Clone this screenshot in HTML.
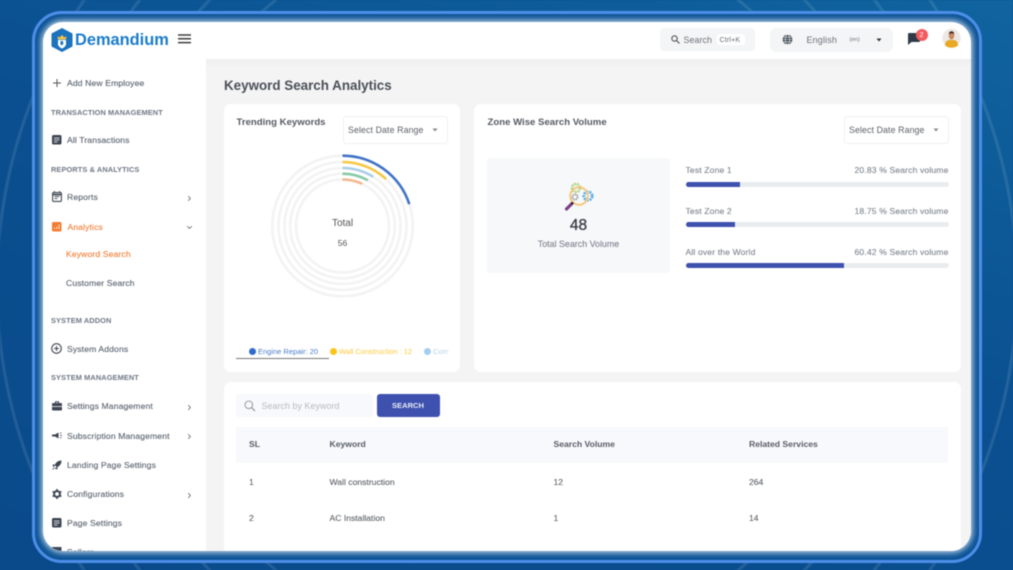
<!DOCTYPE html>
<html><head><meta charset="utf-8"><style>
*{box-sizing:border-box}
html,body{margin:0;padding:0;width:1013px;height:570px;overflow:hidden;background:#0b4f8f}
body{font-family:"Liberation Sans",sans-serif}
#root{position:absolute;left:0;top:0;width:1013px;height:570px;overflow:hidden;filter:blur(.45px);background:
radial-gradient(circle at 507px 285px,transparent 365px,rgba(255,255,255,.1) 366px,rgba(255,255,255,.1) 368px,transparent 369px,transparent 410px,rgba(255,255,255,.1) 411px,rgba(255,255,255,.1) 413px,transparent 414px,transparent 463px,rgba(255,255,255,.1) 464px,rgba(255,255,255,.1) 466px,transparent 467px,transparent 508px,rgba(255,255,255,.1) 509px,rgba(255,255,255,.1) 511px,transparent 512px),
linear-gradient(20deg,#0a4a8a 0%,#0b5091 55%,#10649f 100%)}
.a{position:absolute}
.t{position:absolute;white-space:nowrap;line-height:12px;height:12px}
.s{font-size:8.6px;color:#5b6470;letter-spacing:.12px;-webkit-text-stroke:.12px #5b6470}
.h{font-size:7.4px;font-weight:bold;color:#6f7785;letter-spacing:.1px}
.card{position:absolute;background:#fff;border-radius:7px}
.sel{position:absolute;background:#fff;border:1px solid #eff0f2;border-radius:3px}
.z{font-size:8.6px;color:#7d858f;letter-spacing:.13px;-webkit-text-stroke:.1px #7d858f}
.bar{position:absolute;left:685.5px;width:263px;height:5px;border-radius:3px;background:#e9ecef}
.bar i{display:block;height:5px;border-radius:3px 0 0 3px;background:#3f51ae}
.th{font-size:8.6px;font-weight:bold;color:#555c66}
.td{font-size:8.6px;color:#5b5f66;-webkit-text-stroke:.1px #5b5f66}
</style></head><body><div id="root">
<div class="a" style="left:32px;top:11px;width:950px;height:552px;border:3px solid #4c8ee8;border-radius:30px;background:#0d5496"></div>
<div class="a" style="left:43px;top:22px;width:928px;height:529px;border-radius:20px;background:#fff;overflow:hidden;box-shadow:0 0 6px 2px rgba(235,242,250,.75)">
 <div class="a" style="left:163px;top:37px;width:765px;height:492px;background:linear-gradient(#efefef,#f4f4f5 8px)"></div>
</div>
<div class="a" style="left:43px;top:22px;width:928px;height:529px;border-radius:20px;overflow:hidden" id="inner">
 <div style="position:absolute;left:-43px;top:-22px;width:1013px;height:570px">

 <!-- logo -->
 <svg class="a" style="left:50px;top:27px" width="24" height="26" viewBox="0 0 24 26">
  <path d="M12 1 L22.5 6.5 V19.5 L12 25 L1.5 19.5 V6.5 Z" fill="#1b72bd"/>
  <path d="M7.5 9 L9.5 10.5 L12 8 L14.5 10.5 L16.5 9 L16 12.5 H8 Z" fill="#f3c34b"/>
  <path d="M8 13 H16 V18 Q14 21 12 21.5 Q10 21 8 18 Z" fill="#fff"/>
  <path d="M10.5 14 H12.5 Q14.2 15.5 12.5 18 H10.5 Z" fill="#1b72bd"/>
 </svg>
 <span class="t" style="left:75px;top:32px;height:16px;line-height:16px;font-size:16.4px;font-weight:bold;color:#1b7ccb">Demandium</span>
 <svg class="a" style="left:178px;top:34px" width="13" height="10"><path d="M0 1H13M0 4.8H13M0 8.6H13" stroke="#3d3d3d" stroke-width="1.5"/></svg>

 <!-- sidebar -->
 <svg class="a" style="left:53px;top:79px" width="8" height="8"><path d="M4 0V8M0 4H8" stroke="#555" stroke-width="1"/></svg>
 <span class="t s" style="left:67px;top:77px">Add New Employee</span>
 <span class="t h" style="left:51px;top:106.500px">TRANSACTION MANAGEMENT</span>
 <svg class="a" style="left:52px;top:135px" width="10" height="10"><rect width="9.500" height="9.500" rx="1.500" fill="#3e4652"/><path d="M2 3H7.500M2 5H7.500M2 7H5.500" stroke="#fff" stroke-width=".8"/></svg>
 <span class="t s" style="left:67px;top:134px">All Transactions</span>
 <span class="t h" style="left:51px;top:163.500px">REPORTS &amp; ANALYTICS</span>
 <svg class="a" style="left:52px;top:191px" width="10" height="11"><rect x=".6" y="1.600" width="8.800" height="8.800" rx="1" fill="none" stroke="#3e4652" stroke-width="1.100"/><path d="M.6 3.600H9.400" stroke="#3e4652" stroke-width="1.600"/><path d="M2.500 0V2M7.500 0V2M2.500 5.600H7.500M2.500 7.600H5.500" stroke="#3e4652" stroke-width=".9"/></svg>
 <span class="t s" style="left:67px;top:191px">Reports</span>
 <svg class="a" style="left:187px;top:195px" width="5" height="7"><path d="M1.200 1.200L3.400 3.500L1.200 5.800" fill="none" stroke="#666" stroke-width=".8"/></svg>
 <svg class="a" style="left:52px;top:222px" width="10" height="10"><rect width="9.500" height="9.500" rx="1.500" fill="#f47b32"/><path d="M2.500 7V5.800M4.800 7V4.800M7 7V2.500" stroke="#fff" stroke-width=".8"/></svg>
 <span class="t s" style="left:67.500px;top:220.500px;color:#f0803c;-webkit-text-stroke-color:#f0803c">Analytics</span>
 <svg class="a" style="left:186px;top:225px" width="7" height="5"><path d="M1.200 1.200L3.500 3.400L5.800 1.200" fill="none" stroke="#666" stroke-width=".8"/></svg>
 <span class="t s" style="left:66px;top:248px;color:#f0803c;-webkit-text-stroke-color:#f0803c">Keyword Search</span>
 <span class="t s" style="left:66px;top:277px">Customer Search</span>
 <span class="t h" style="left:51px;top:315px">SYSTEM ADDON</span>
 <svg class="a" style="left:51px;top:343px" width="11" height="11"><circle cx="5.500" cy="5.500" r="4.800" fill="none" stroke="#3e4652" stroke-width="1.100"/><path d="M5.500 3V8M3 5.500H8" stroke="#3e4652" stroke-width="1"/></svg>
 <span class="t s" style="left:67px;top:343px">System Addons</span>
 <span class="t h" style="left:51px;top:372px">SYSTEM MANAGEMENT</span>
 <svg class="a" style="left:52px;top:401px" width="10" height="10"><path d="M3.500 2V.8H6.500V2" fill="none" stroke="#3e4652"/><rect y="2" width="10" height="7.500" rx="1" fill="#3e4652"/><path d="M0 5.500H10" stroke="#fff" stroke-width=".8"/></svg>
 <span class="t s" style="left:67px;top:400px">Settings Management</span>
 <svg class="a" style="left:187px;top:404px" width="5" height="7"><path d="M1.200 1.200L3.400 3.500L1.200 5.800" fill="none" stroke="#666" stroke-width=".8"/></svg>
 <svg class="a" style="left:52px;top:431px" width="10" height="10"><path d="M0 3.500H3L6.500 1.500V7.500L3 5.500H0Z" fill="#3e4652"/><path d="M8 2.500L9.500 1.800M8 4.500H10M8 6.500L9.500 7.200" stroke="#3e4652" stroke-width=".8"/></svg>
 <span class="t s" style="left:67px;top:429.500px">Subscription Management</span>
 <svg class="a" style="left:187px;top:433px" width="5" height="7"><path d="M1.200 1.200L3.400 3.500L1.200 5.800" fill="none" stroke="#666" stroke-width=".8"/></svg>
 <svg class="a" style="left:52px;top:460px" width="10" height="10"><path d="M9.500 .5C6.500 .5 4 2 2.800 5L5 7.200C8 6 9.500 3.500 9.500 .5Z" fill="#3e4652"/><path d="M1 5H3L1.500 6.500ZM5 9V7L3.500 8.500ZM.5 9.500L2.500 7.500" stroke="#3e4652" stroke-width=".8" fill="#3e4652"/></svg>
 <span class="t s" style="left:67px;top:458.500px">Landing Page Settings</span>
 <svg class="a" style="left:52px;top:489px" width="10" height="10" viewBox="0 0 10 10"><circle cx="5" cy="5" r="2.900" fill="none" stroke="#3e4652" stroke-width="2"/><path d="M5 0V2M5 8V10M.7 2.500L2.400 3.500M7.600 6.500L9.300 7.500M.7 7.500L2.400 6.500M7.600 3.500L9.300 2.500" stroke="#3e4652" stroke-width="1.600"/></svg>
 <span class="t s" style="left:67px;top:488px">Configurations</span>
 <svg class="a" style="left:187px;top:492px" width="5" height="7"><path d="M1.200 1.200L3.400 3.500L1.200 5.800" fill="none" stroke="#666" stroke-width=".8"/></svg>
 <svg class="a" style="left:52px;top:518px" width="10" height="10"><rect width="9.500" height="9.500" rx="1.500" fill="#3e4652"/><path d="M2 3H7.500M2 5H7.500M2 7H5.500" stroke="#fff" stroke-width=".8"/></svg>
 <span class="t s" style="left:67px;top:517px">Page Settings</span>
 <svg class="a" style="left:52px;top:547px" width="10" height="4"><rect width="9.500" height="4" fill="#3e4652"/></svg>
 <span class="t s" style="left:67px;top:545.500px">Sellers</span>

 <!-- topbar -->
 <div class="a" style="left:660px;top:28px;width:95px;height:23px;background:#f4f5f6;border-radius:4px"></div>
 <svg class="a" style="left:671px;top:35px" width="9" height="9"><circle cx="3.500" cy="3.500" r="2.700" fill="none" stroke="#555" stroke-width="1.100"/><path d="M5.500 5.500L8.500 8.500" stroke="#555" stroke-width="1.200"/></svg>
 <span class="t" style="left:683.500px;top:33.500px;font-size:8.800px;color:#6b7078;letter-spacing:.1px">Search</span>
 <div class="a" style="left:717px;top:34px;width:28px;height:11px;background:#fff;border-radius:3px"></div>
 <span class="t" style="left:719.500px;top:33.500px;font-size:7.200px;color:#666c75;letter-spacing:.1px">Ctrl+K</span>
 <div class="a" style="left:770px;top:28px;width:123px;height:24px;background:#f4f5f6;border-radius:6px"></div>
 <svg class="a" style="left:782px;top:34px" width="11" height="11" viewBox="0 0 11 11"><circle cx="5.500" cy="5.500" r="4.900" fill="#3e4652"/><path d="M.6 5.500H10.400M1.300 3.200H9.700M1.300 7.800H9.700" stroke="#f4f5f6" stroke-width=".6"/><ellipse cx="5.500" cy="5.500" rx="2.200" ry="4.900" fill="none" stroke="#f4f5f6" stroke-width=".6"/></svg>
 <span class="t" style="left:806.500px;top:33.500px;font-size:9px;color:#6b7078;letter-spacing:.15px">English</span>
 <span class="t" style="left:849.500px;top:34px;font-size:5.800px;color:#666c75">(en)</span>
 <svg class="a" style="left:876px;top:38px" width="6" height="4"><path d="M.5 .5H5.500L3 3.500Z" fill="#333"/></svg>
 <svg class="a" style="left:908px;top:33px" width="12" height="13"><path d="M1 0H11Q12 0 12 1V8Q12 9 11 9H3.500L0 12V1Q0 0 1 0Z" fill="#2f3a48"/></svg>
 <div class="a" style="left:915.500px;top:29px;width:12px;height:12px;border-radius:50%;background:#f45b5f"></div>
 <span class="t" style="left:915.500px;top:29px;width:12px;text-align:center;font-size:7.500px;color:#fff">2</span>
 <svg class="a" style="left:942px;top:28px" width="19" height="20" viewBox="0 0 19 20">
  <circle cx="9.500" cy="10" r="9.200" fill="#ece9e5"/>
  <path d="M3 17.500Q3 12.500 7 12H12Q16 12.500 16 17.500Q13 19.800 9.500 19.800T3 17.500Z" fill="#e9a826"/>
  <ellipse cx="9.500" cy="7.500" rx="2.800" ry="4" fill="#c98a63"/>
  <path d="M6.800 6Q7 3.200 9.500 3.200T12.200 6Q9.500 4.800 6.800 6Z" fill="#4a2e1f"/>
 </svg>

 <span class="t" style="left:224px;top:77.500px;height:16px;line-height:16px;font-size:13.400px;font-weight:bold;color:#4a4f57">Keyword Search Analytics</span>

 <!-- card 1 -->
 <div class="card" style="left:224px;top:104px;width:236px;height:268px"></div>
 <span class="t" style="left:236.500px;top:116px;font-size:9.600px;font-weight:bold;color:#555a63;padding-top:.5px">Trending Keywords</span>
 <div class="sel" style="left:343px;top:116px;width:105px;height:28px"></div>
 <span class="t" style="left:348px;top:124px;font-size:8.800px;color:#5b5f66;letter-spacing:.1px">Select Date Range</span>
 <svg class="a" style="left:432px;top:128px" width="6" height="4"><path d="M.5 .5H5.500L3 3.500Z" fill="#888"/></svg>
 <svg class="a" style="left:262px;top:146px" width="162" height="162" viewBox="0 0 162 162" fill="none" stroke-width="2.600">
  <g stroke="#f3f3f3"><circle cx="80.500" cy="80" r="70.300"/><circle cx="80.500" cy="80" r="64"/><circle cx="80.500" cy="80" r="58"/><circle cx="80.500" cy="80" r="52.300"/><circle cx="80.500" cy="80" r="46.500"/></g>
  <g transform="rotate(-90 80.500 80)">
   <circle cx="80.500" cy="80" r="70.300" pathLength="360" stroke="#4275c8" stroke-dasharray="72 360"/>
   <circle cx="80.500" cy="80" r="64" pathLength="360" stroke="#f6c843" stroke-dasharray="43 360"/>
   <circle cx="80.500" cy="80" r="58" pathLength="360" stroke="#aacde8" stroke-dasharray="32 360"/>
   <circle cx="80.500" cy="80" r="52.300" pathLength="360" stroke="#87cba8" stroke-dasharray="29 360"/>
   <circle cx="80.500" cy="80" r="46.500" pathLength="360" stroke="#f3b68c" stroke-dasharray="25 360"/>
  </g>
 </svg>
 <span class="t" style="left:302.500px;top:217.500px;width:80px;text-align:center;font-size:10px;color:#555">Total</span>
 <span class="t" style="left:302.500px;top:237px;width:80px;text-align:center;font-size:8.500px;color:#555">56</span>
 <div class="a" style="left:249px;top:347.500px;width:7px;height:7px;border-radius:50%;background:#2f6cc8"></div>
 <span class="t" style="left:258px;top:345.500px;font-size:7.500px;color:#4a7cc8">Engine Repair: 20</span>
 <div class="a" style="left:330px;top:347.500px;width:7px;height:7px;border-radius:50%;background:#fcc419"></div>
 <span class="t" style="left:339px;top:345.500px;font-size:7.500px;color:#fbc93a">Wall Construction : 12</span>
 <div class="a" style="left:423.500px;top:347.500px;width:7px;height:7px;border-radius:50%;background:#a6cdec"></div>
 <span class="t" style="left:433px;top:345.500px;width:15px;overflow:hidden;font-size:7.500px;color:#b3d4ee">Com</span>
 <div class="a" style="left:236px;top:358px;width:93px;height:1px;background:#777"></div>

 <!-- card 2 -->
 <div class="card" style="left:474px;top:104px;width:487px;height:268px"></div>
 <span class="t" style="left:487.500px;top:116px;font-size:9.600px;font-weight:bold;color:#555a63;padding-top:.5px">Zone Wise Search Volume</span>
 <div class="sel" style="left:844px;top:116px;width:105px;height:28px"></div>
 <span class="t" style="left:849px;top:124px;font-size:8.800px;color:#5b5f66;letter-spacing:.1px">Select Date Range</span>
 <svg class="a" style="left:933px;top:128px" width="6" height="4"><path d="M.5 .5H5.500L3 3.500Z" fill="#888"/></svg>
 <div class="a" style="left:487px;top:158px;width:183px;height:115px;background:#f7f8fa;border-radius:3px"></div>
 <svg class="a" style="left:560px;top:180px" width="38" height="34" viewBox="0 0 38 34" fill="none">
  <circle cx="16" cy="8" r="4" stroke="#a8d27a" stroke-width="2.500" stroke-dasharray="1.800 1"/>
  <circle cx="28" cy="16" r="4.200" stroke="#5aaee8" stroke-width="2.800" stroke-dasharray="2 1"/>
  <circle cx="15" cy="17" r="2.600" stroke="#8a8f98" stroke-width="1.600" stroke-dasharray="1.300 .7"/>
  <circle cx="19" cy="16" r="8.800" stroke="#f5c77e" stroke-width="2"/>
  <path d="M6.500 29L11.500 24" stroke="#7b3f86" stroke-width="3.200" stroke-linecap="round"/>
  <path d="M11.500 24L13 22.500" stroke="#222" stroke-width="2.500"/>
 </svg>
 <span class="t" style="left:487px;top:218px;height:15px;line-height:15px;width:183px;text-align:center;font-size:15.500px;color:#3b3f46;-webkit-text-stroke:.35px #3b3f46">48</span>
 <span class="t" style="left:487px;top:238px;width:183px;text-align:center;font-size:8.900px;color:#7d858f;-webkit-text-stroke:.1px #7d858f">Total Search Volume</span>

 <span class="t z" style="left:685.500px;top:164px">Test Zone 1</span>
 <span class="t z" style="right:64.500px;top:164px">20.83 % Search volume</span>
 <div class="bar" style="top:182px"><i style="width:54.500px"></i></div>
 <span class="t z" style="left:685.500px;top:205px">Test Zone 2</span>
 <span class="t z" style="right:64.500px;top:205px">18.75 % Search volume</span>
 <div class="bar" style="top:222px"><i style="width:49.500px"></i></div>
 <span class="t z" style="left:685.500px;top:245.500px">All over the World</span>
 <span class="t z" style="right:64.500px;top:245.500px">60.42 % Search volume</span>
 <div class="bar" style="top:263px"><i style="width:158.500px"></i></div>

 <!-- card 3 -->
 <div class="card" style="left:224px;top:382px;width:737px;height:175px"></div>
 <div class="a" style="left:236px;top:394px;width:137px;height:23px;background:#f8f9fc;border-radius:3px"></div>
 <svg class="a" style="left:244px;top:400px" width="12" height="12"><circle cx="4.800" cy="4.800" r="3.800" fill="none" stroke="#9a9fa6" stroke-width="1.100"/><path d="M7.500 7.500L11 11" stroke="#9a9fa6" stroke-width="1.300"/></svg>
 <span class="t" style="left:261.500px;top:400px;font-size:8.800px;color:#b4b9c0;letter-spacing:.1px">Search by Keyword</span>
 <div class="a" style="left:376.500px;top:394px;width:63px;height:23px;background:#3f51ae;border-radius:3px"></div>
 <span class="t" style="left:376.500px;top:399.500px;width:63px;text-align:center;font-size:7.600px;font-weight:bold;color:#e8ecf8">SEARCH</span>
 <div class="a" style="left:236px;top:427px;width:712px;height:36px;background:#f8f9fc"></div>
 <span class="t th" style="left:249px;top:438px">SL</span>
 <span class="t th" style="left:329.500px;top:438px">Keyword</span>
 <span class="t th" style="left:553.500px;top:438px">Search Volume</span>
 <span class="t th" style="left:749px;top:438px">Related Services</span>
 <span class="t td" style="left:249px;top:475.500px">1</span>
 <span class="t td" style="left:329.500px;top:475.500px">Wall construction</span>
 <span class="t td" style="left:553.500px;top:475.500px">12</span>
 <span class="t td" style="left:749px;top:475.500px">264</span>
 <span class="t td" style="left:249px;top:512px">2</span>
 <span class="t td" style="left:329.500px;top:512px">AC Installation</span>
 <span class="t td" style="left:553.500px;top:512px">1</span>
 <span class="t td" style="left:749px;top:512px">14</span>
 </div>
</div>
</div></body></html>
